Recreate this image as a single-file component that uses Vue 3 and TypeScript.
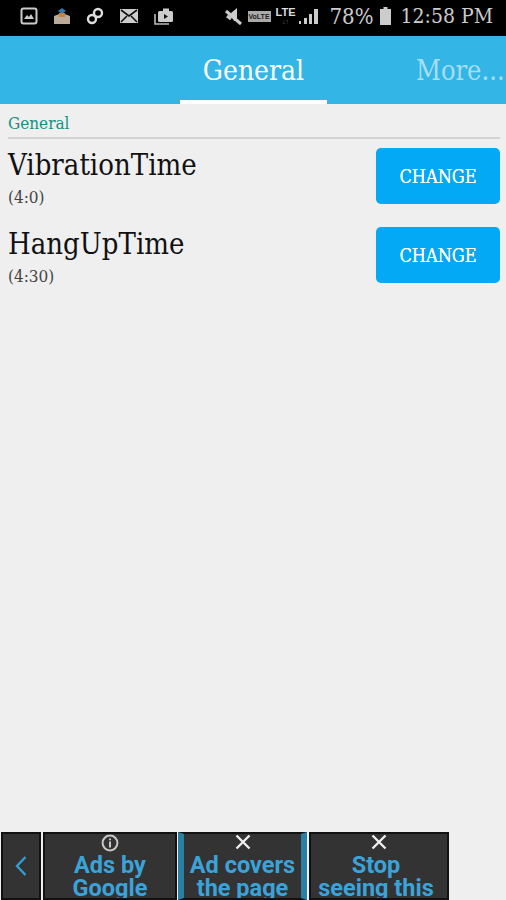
<script setup lang="ts">
const settings = [
  { name: "VibrationTime", value: "(4:0)" },
  { name: "HangUpTime", value: "(4:30)" },
];
</script>

<template>
  <div class="screen">
    <div class="status-bar">
      <div class="status-left">
        <svg width="18" height="18" viewBox="0 0 18 18" class="ic">
          <rect x="1.5" y="1.5" width="15" height="15" rx="2" fill="none" stroke="#ccc" stroke-width="2" />
          <path d="M4 12l3-4 2 2 2-3 3 5z" fill="#ccc" />
        </svg>
        <svg width="18" height="20" viewBox="0 0 18 20" class="ic">
          <path d="M1 10l8-3 8 3v8H1z" fill="#b9ab9c" />
          <path d="M5 5l4-3 4 3-4 3z" fill="#2f78b0" />
          <path d="M6 7h6v4H6z" fill="#c9803c" />
        </svg>
        <svg width="18" height="18" viewBox="0 0 18 18" class="ic">
          <circle cx="6" cy="12" r="4" fill="none" stroke="#ddd" stroke-width="2.4" />
          <circle cx="12" cy="6" r="4" fill="none" stroke="#ddd" stroke-width="2.4" />
        </svg>
        <svg width="20" height="16" viewBox="0 0 20 16" class="ic">
          <rect x="1" y="1" width="18" height="14" fill="#ccc" />
          <path d="M2 2l8 6 8-6M2 14l6-6M18 14l-6-6" fill="none" stroke="#111" stroke-width="1.6" />
        </svg>
        <svg width="20" height="18" viewBox="0 0 20 18" class="ic">
          <path d="M1 7v10h14" fill="none" stroke="#bbb" stroke-width="1.6" />
          <rect x="4" y="4" width="15" height="11" rx="1.5" fill="#ccc" />
          <path d="M9 1.5h6V4H9z" fill="#ccc" />
          <path d="M10 7l4 2.5-4 2.5z" fill="#111" />
        </svg>
      </div>
      <div class="status-right">
        <svg width="19" height="19" viewBox="0 0 19 19" class="ic">
          <path d="M7 6l6-5v13l-3 0z" fill="#ccc" />
          <path d="M2 4l15 13" stroke="#ccc" stroke-width="3" />
          <path d="M3 9l4 3" stroke="#ccc" stroke-width="3" />
        </svg>
        <span class="wifi-call">VoLTE</span>
        <span class="lte"><b>LTE</b><i>↓↑</i></span>
        <svg width="20" height="16" viewBox="0 0 20 16" class="ic signal">
          <path d="M0 13h2v3H0zM5 10h3v6H5zM10 6h3v10h-3zM15 1h4v15h-4z" fill="#ccc" />
        </svg>
        <span class="percent">78%</span>
        <svg width="11" height="18" viewBox="0 0 11 18" class="ic">
          <path d="M3.5 0h4v2H11v16H0V2h3.5z" fill="#ccc" />
        </svg>
        <span class="clock">12:58 PM</span>
      </div>
    </div>

    <header class="tabs">
      <div class="tab active">General</div>
      <div class="tab more">More...</div>
    </header>

    <main class="content">
      <div class="section-title">General</div>
      <div v-for="item in settings" :key="item.name" class="row">
        <div class="row-copy">
          <div class="row-name">{{ item.name }}</div>
          <div class="row-value">{{ item.value }}</div>
        </div>
        <button class="change" type="button">CHANGE</button>
      </div>
    </main>

    <div class="ad-bar">
      <div class="ad-cell back">
        <svg width="14" height="22" viewBox="0 0 14 22">
          <path d="M11.5 2L3 11l8.5 9" fill="none" stroke="#2f9fd4" stroke-width="2.4" />
        </svg>
      </div>
      <div class="ad-cell ads">
        <svg width="18" height="18" viewBox="0 0 18 18" class="ad-icon info">
          <circle cx="9" cy="9" r="7.4" fill="none" stroke="#c8c8c8" stroke-width="2" />
          <path d="M9 4.4v1.8M9 7.6v6" stroke="#c8c8c8" stroke-width="2" />
        </svg>
        <div class="ad-text">Ads by<br />Google</div>
      </div>
      <div class="ad-cell covers">
        <svg width="16" height="16" viewBox="0 0 16 16" class="ad-icon">
          <path d="M1.5 1.5l13 13M14.5 1.5l-13 13" stroke="#eee" stroke-width="2.4" />
        </svg>
        <div class="ad-text">Ad covers<br />the page</div>
      </div>
      <div class="ad-cell stop">
        <svg width="16" height="16" viewBox="0 0 16 16" class="ad-icon">
          <path d="M1.5 1.5l13 13M14.5 1.5l-13 13" stroke="#eee" stroke-width="2.4" />
        </svg>
        <div class="ad-text">Stop<br />seeing this</div>
      </div>
    </div>
  </div>
</template>

<style scoped>
.screen {
  width: 506px;
  height: 900px;
  display: flex;
  flex-direction: column;
  overflow: hidden;
  background: #efefef;
  font-family: "DejaVu Serif Condensed", "DejaVu Serif", serif;
}

.status-bar {
  height: 36px;
  flex: none;
  display: flex;
  align-items: center;
  justify-content: space-between;
  padding: 0 13px 4px 20px;
  box-sizing: border-box;
  background: #000;
  color: #ccc;
}

.status-left {
  display: flex;
  align-items: center;
  gap: 15px;
}

.status-right {
  display: flex;
  align-items: center;
  gap: 5px;
}

.ic {
  display: block;
  flex: none;
}

.wifi-call {
  width: 23px;
  height: 11px;
  background: #aaa;
  color: #222;
  font: bold 7px/11px "Liberation Sans", sans-serif;
  text-align: center;
}

.lte {
  display: flex;
  flex-direction: column;
  align-items: center;
  color: #ddd;
  font: bold 11px/11px "Liberation Sans", sans-serif;
}

.lte i {
  font-style: normal;
  font-size: 7px;
  line-height: 8px;
  color: #666;
}

.signal {
  margin-left: -1px;
  margin-right: 5px;
}

.percent {
  margin-right: 2px;
  font: 22px "DejaVu Serif Condensed", "DejaVu Serif", serif;
  color: #ccc;
}

.clock {
  margin-left: 4px;
  font: 21px "DejaVu Serif Condensed", "DejaVu Serif", serif;
  color: #ccc;
}

.tabs {
  height: 68px;
  flex: none;
  display: flex;
  padding-left: 180px;
  box-sizing: border-box;
  background: #33b5e5;
}

.tab {
  flex: none;
  font-size: 28px;
  line-height: 70px;
  white-space: nowrap;
}

.tab.active {
  width: 147px;
  height: 68px;
  box-sizing: border-box;
  border-bottom: 4px solid #fff;
  color: #fff;
  text-align: center;
}

.tab.more {
  margin-left: 89px;
  color: #a6def5;
  font-size: 27px;
}

.content {
  flex: 1;
  padding: 8px 6px 0 8px;
}

.section-title {
  height: 27px;
  box-sizing: border-box;
  border-bottom: 2px solid #d2d2d2;
  color: #12917f;
  font-size: 17px;
  line-height: 23px;
}

.row {
  height: 79.4px;
  display: flex;
  align-items: flex-start;
  justify-content: space-between;
  padding-top: 9px;
  box-sizing: border-box;
}

.row-name {
  margin-top: -1px;
  color: #111;
  font-size: 29px;
  line-height: 36px;
}

.row-value {
  margin-top: 3px;
  color: #444;
  font-size: 17px;
  line-height: 22px;
}

.change {
  width: 124px;
  height: 56px;
  padding: 0;
  border: 0;
  border-radius: 5px;
  background: #03a9f4;
  color: #fff;
  font-family: inherit;
  font-size: 18px;
  text-shadow: 0 0 0.6px #fff;
}

.ad-bar {
  height: 68px;
  flex: none;
  display: flex;
  align-items: flex-start;
  padding-left: 1px;
  gap: 2px;
}

.ad-cell {
  position: relative;
  height: 68px;
  box-sizing: border-box;
  border: 2px solid #111;
  background: #333;
  overflow: hidden;
  text-align: center;
}

.back {
  width: 40px;
  display: flex;
  align-items: center;
  justify-content: center;
}

.ads {
  width: 134px;
}

.covers {
  width: 129px;
  margin-left: -1px;
  border-left: 6px solid #2a7fa5;
  border-right: 6px solid #2a7fa5;
}

.stop {
  width: 140px;
}

.ad-icon {
  position: absolute;
  left: 50%;
  top: 0;
  margin-left: -8px;
}

.ad-icon.info {
  margin-left: -9px;
}

.ad-text {
  margin-top: 20px;
  color: #3ba3d9;
  font: bold 23.5px/22.5px Roboto, "Liberation Sans", sans-serif;
  white-space: nowrap;
}

.covers .ad-text {
  margin-left: -6px;
  margin-right: -6px;
}

.stop .ad-text {
  margin-left: -3px;
  margin-right: 3px;
}
</style>
